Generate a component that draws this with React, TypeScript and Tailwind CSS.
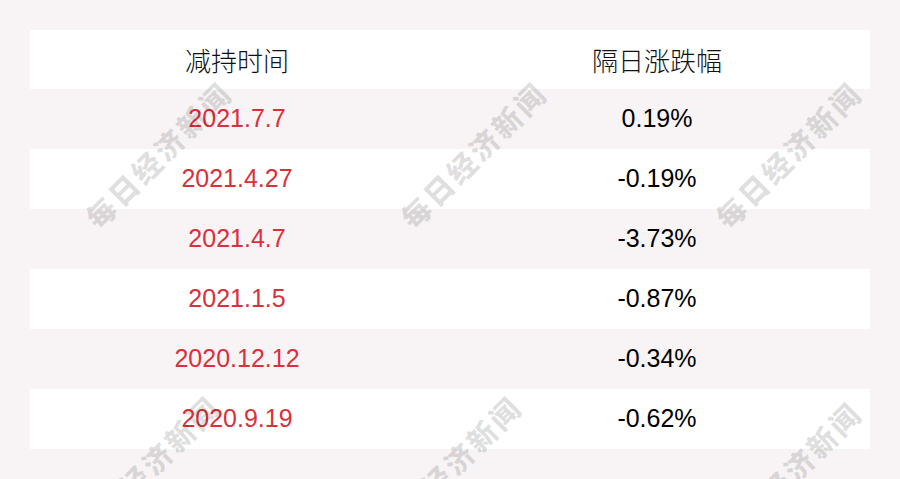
import React from "react";

const rows = [
  { date: "2021.7.7", change: "0.19%" },
  { date: "2021.4.27", change: "-0.19%" },
  { date: "2021.4.7", change: "-3.73%" },
  { date: "2021.1.5", change: "-0.87%" },
  { date: "2020.12.12", change: "-0.34%" },
  { date: "2020.9.19", change: "-0.62%" },
];

// watermark centres, picked off the reference
const marks = [
  { left: "left-[58px]", top: "top-[140px]" },
  { left: "left-[373px]", top: "top-[140px]" },
  { left: "left-[688px]", top: "top-[140px]" },
  { left: "left-[46px]", top: "top-[454px]" },
  { left: "left-[348px]", top: "top-[454px]" },
  { left: "left-[688px]", top: "top-[460px]" },
];

const Watermark = ({ left, top }: any) => (
  <div
    className={`pointer-events-none absolute ${left} ${top} w-[200px] -rotate-45 text-center text-[29px] font-black tracking-[3px] leading-none text-black/[0.12] whitespace-nowrap`}
    style={{ fontFamily: '"Noto Sans CJK SC", sans-serif' }}
  >
    每日经济新闻
  </div>
);

const App = () => {
  return (
    <div className="relative h-[479px] w-[900px] overflow-hidden bg-[#f8f4f5] pt-[30px]">
      <div className="mx-[30px] w-[840px] font-['Liberation_Sans','Noto_Sans_CJK_SC',sans-serif]">
        <div className="grid h-[59px] grid-cols-[414px_426px] items-center bg-white text-[26px] text-[#111]">
          <div className="text-center font-['Noto_Sans_CJK_SC',sans-serif] font-light">减持时间</div>
          <div className="text-center font-['Noto_Sans_CJK_SC',sans-serif] font-light">隔日涨跌幅</div>
        </div>
        {rows.map((r, i) => (
          <div
            key={r.date}
            className={`grid h-[60px] grid-cols-[414px_426px] items-center text-[25px] ${
              i % 2 === 1 ? "bg-white" : ""
            }`}
          >
            <div className="text-center text-[#d9303a]">{r.date}</div>
            <div className="text-center text-black">{r.change}</div>
          </div>
        ))}
      </div>
      {marks.map((m, i) => (
        <Watermark key={i} {...m} />
      ))}
    </div>
  );
};

export default App;
